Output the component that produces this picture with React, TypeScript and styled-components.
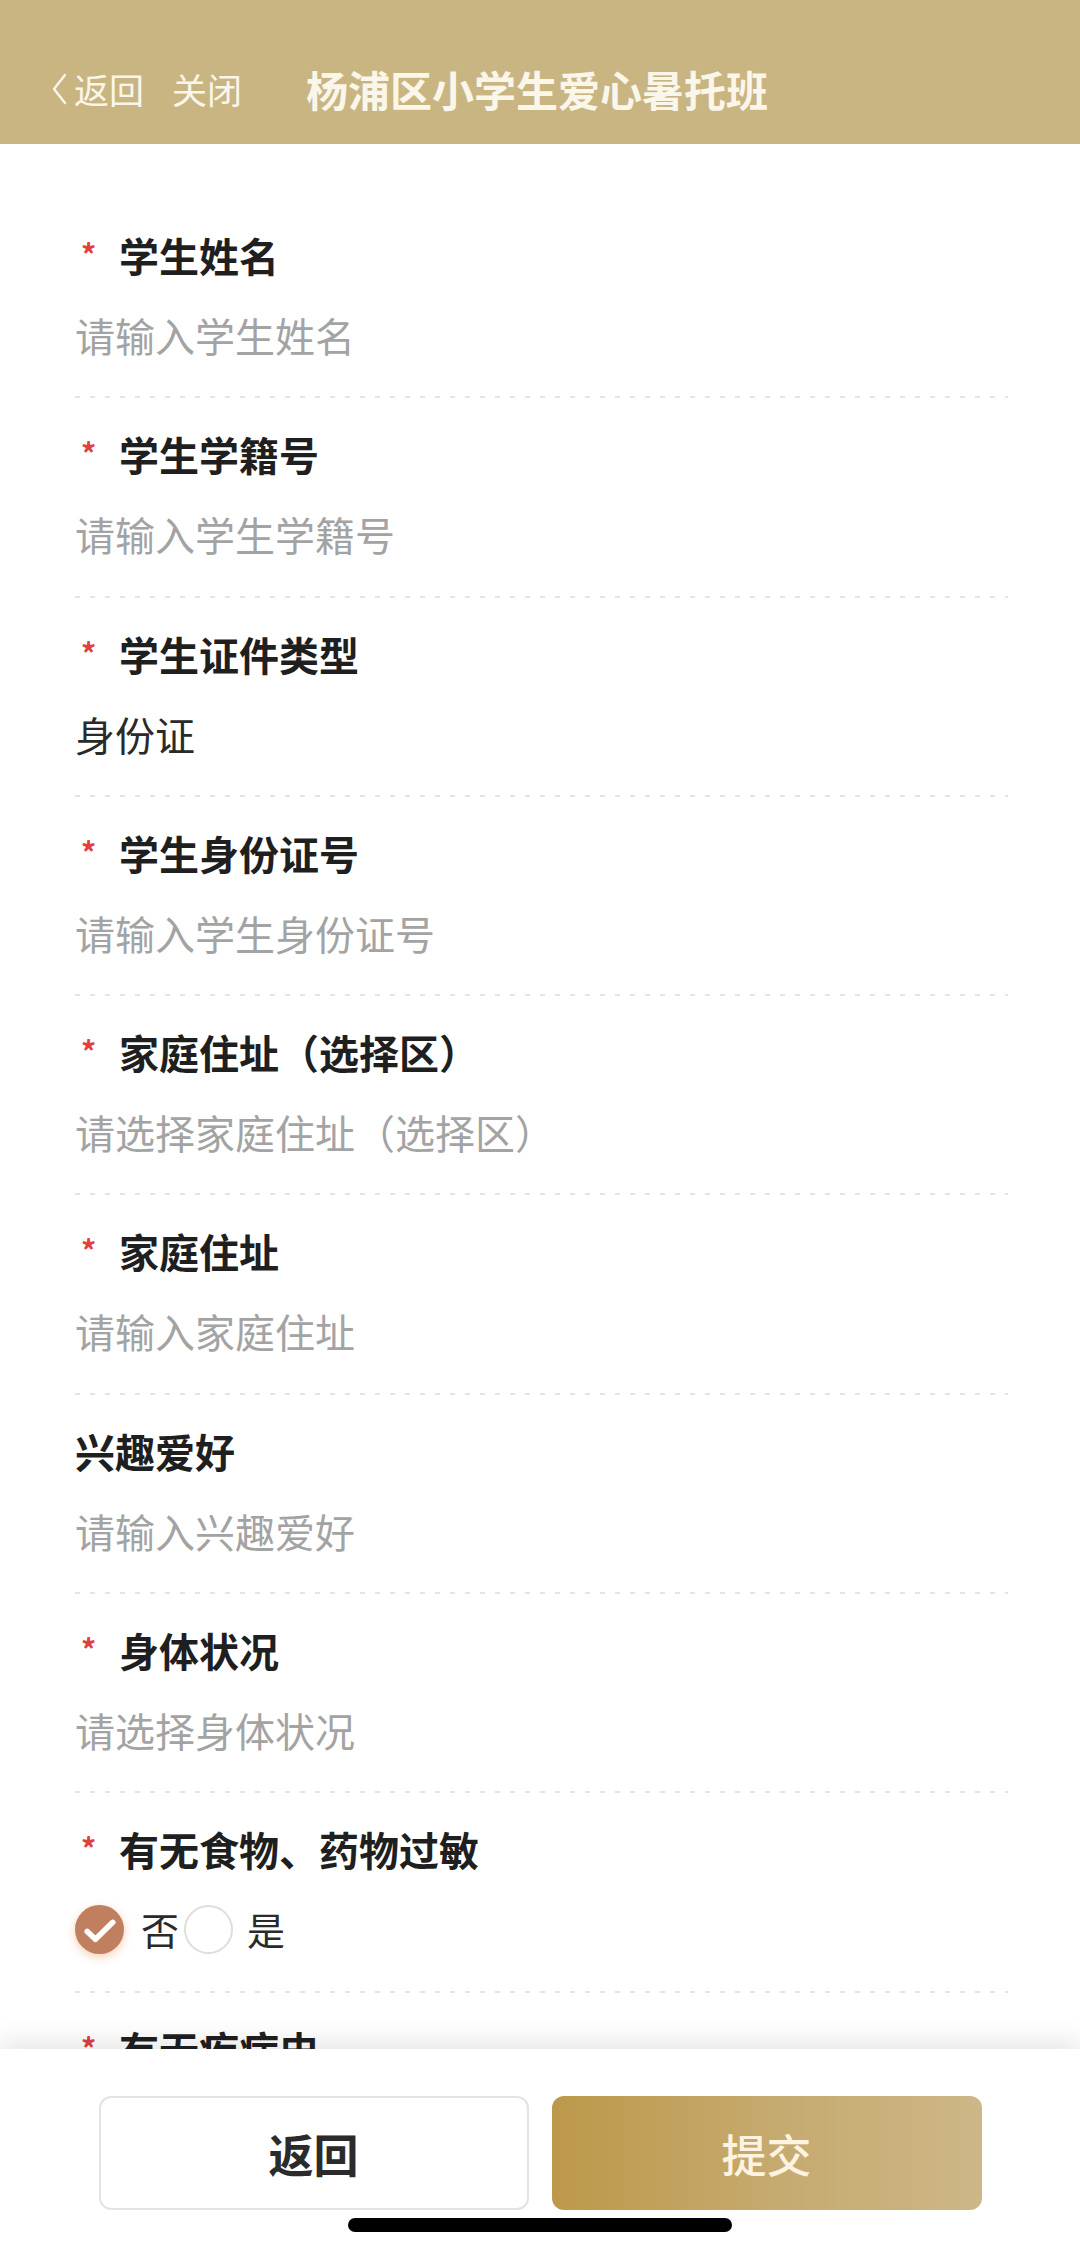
import React, { useState } from "react";
import styled, { createGlobalStyle } from "styled-components";

const GlobalStyle = createGlobalStyle`
    html, body {
        margin: 0;
        padding: 0;
        background: #ffffff;
    }
    body {
        font-family: "Noto Sans CJK SC", "Noto Sans", sans-serif;
    }
    * {
        box-sizing: border-box;
    }
`;

const StyledPage = styled.div`
    display: flex;
    flex-direction: column;
    width: 1080px;
    height: 2252px;
    overflow: hidden;
    background: #ffffff;
`;

const StyledHeader = styled.div`
    display: flex;
    flex-direction: row;
    align-items: center;
    flex-shrink: 0;
    height: 144px;
    padding: 33px 0 0 52px;
    background: #c9b582;
    color: #fbf6ea;
`;

const StyledNavButton = styled.div<{ $space: number }>`
    display: flex;
    flex-direction: row;
    align-items: center;
    gap: 7px;
    font-size: 35px;
    line-height: 48px;
    margin-right: ${(p) => p.$space}px;
    user-select: none;
    cursor: pointer;
`;

const StyledTitle = styled.div`
    font-size: 42px;
    font-weight: 700;
    line-height: 60px;
`;

const StyledForm = styled.div`
    flex: 1;
    min-height: 0;
    overflow: hidden;
    padding: 55px 72px 0 75px;
`;

const StyledRow = styled.div`
    display: flex;
    flex-direction: column;
    gap: 30px;
    padding: 31px 0 38.3px;
    background-image: repeating-linear-gradient(to right, #e4e4e4 0 5px, transparent 5px 15px);
    background-size: 100% 2px;
    background-position: left bottom;
    background-repeat: no-repeat;
`;

const StyledLabel = styled.div`
    display: flex;
    flex-direction: row;
    align-items: center;
    height: 50px;
    font-size: 40px;
    font-weight: 700;
    color: #1f1f1f;
`;

const StyledStar = styled.span`
    display: inline-block;
    width: 44px;
    padding-left: 6px;
    font-size: 30px;
    font-weight: 700;
    line-height: 30px;
    color: #e0413f;
    align-self: flex-start;
    margin-top: 8px;
`;

const StyledValue = styled.div<{ $filled?: boolean }>`
    height: 50px;
    font-size: 40px;
    line-height: 50px;
    color: ${(p) => (p.$filled ? "#2a2a2a" : "#a3a3a3")};
`;

const StyledRadioGroup = styled.div`
    display: flex;
    flex-direction: row;
    align-items: center;
    height: 50px;
    font-size: 38px;
    color: #2a2a2a;
`;

const StyledRadio = styled.div`
    display: flex;
    flex-direction: row;
    align-items: center;
    cursor: pointer;
`;

const StyledRadioDot = styled.div<{ $checked: boolean }>`
    display: flex;
    align-items: center;
    justify-content: center;
    width: 49px;
    height: 49px;
    border-radius: 50%;
    background: ${(p) => (p.$checked ? "#c0805f" : "#ffffff")};
    border: ${(p) => (p.$checked ? "none" : "2px solid #dedede")};
    box-shadow: ${(p) => (p.$checked ? "0 3px 10px rgba(232, 150, 90, 0.45)" : "none")};
`;

const StyledRadioText = styled.span<{ $left: number }>`
    margin-left: ${(p) => p.$left}px;
    margin-right: 5px;
    line-height: 50px;
`;

const StyledFooter = styled.div`
    position: relative;
    z-index: 1;
    display: flex;
    flex-direction: column;
    align-items: center;
    flex-shrink: 0;
    height: 203px;
    padding-top: 47px;
    background: #ffffff;
    box-shadow: 0 -10px 22px rgba(0, 0, 0, 0.09);
`;

const StyledButtonRow = styled.div`
    display: grid;
    grid-template-columns: 430px 430px;
    gap: 23px;
`;

const StyledButton = styled.button<{ $primary?: boolean }>`
    all: unset;
    display: flex;
    align-items: center;
    justify-content: center;
    height: 114px;
    border-radius: 12px;
    font-family: "Noto Sans CJK SC", sans-serif;
    font-size: 45px;
    font-weight: ${(p) => (p.$primary ? 500 : 700)};
    color: ${(p) => (p.$primary ? "#fcf4e0" : "#2b2b2b")};
    background: ${(p) => (p.$primary ? "linear-gradient(to right, #bd984a, #c6ab71 55%, #cdb787)" : "#ffffff")};
    border: ${(p) => (p.$primary ? "none" : "2px solid #e3e3e3")};
    box-sizing: border-box;
    cursor: pointer;
    user-select: none;
`;

const StyledHomeBar = styled.div`
    width: 384px;
    height: 14px;
    margin-top: 8px;
    border-radius: 7px;
    background: #000000;
`;

const ChevronIcon = () => (
    <svg width="15" height="32" viewBox="0 0 15 32">
        <polyline points="13,2 2,16 13,30" fill="none" stroke="#fbf6ea" strokeWidth="2.4" strokeLinecap="round" strokeLinejoin="round" />
    </svg>
);

const CheckIcon = () => (
    <svg width="49" height="49" viewBox="0 0 48 48">
        <polyline points="12,26 20,33.5 37,17" fill="none" stroke="#ffffff" strokeWidth="5.5" strokeLinecap="round" strokeLinejoin="round" />
    </svg>
);

const fields = [
    { label: "学生姓名", value: "请输入学生姓名", required: true },
    { label: "学生学籍号", value: "请输入学生学籍号", required: true },
    { label: "学生证件类型", value: "身份证", required: true, filled: true },
    { label: "学生身份证号", value: "请输入学生身份证号", required: true },
    { label: "家庭住址（选择区）", value: "请选择家庭住址（选择区）", required: true },
    { label: "家庭住址", value: "请输入家庭住址", required: true },
    { label: "兴趣爱好", value: "请输入兴趣爱好", required: false },
    { label: "身体状况", value: "请选择身体状况", required: true },
];

const App = () => {
    const [allergy, setAllergy] = useState("no");

    return (
        <StyledPage>
            <GlobalStyle />
            <StyledHeader>
                <StyledNavButton $space={28}>
                    <ChevronIcon />
                    <span>返回</span>
                </StyledNavButton>
                <StyledNavButton $space={64}>关闭</StyledNavButton>
                <StyledTitle>杨浦区小学生爱心暑托班</StyledTitle>
            </StyledHeader>
            <StyledForm>
                {fields.map((f) => (
                    <StyledRow key={f.label}>
                        <StyledLabel>
                            {f.required && <StyledStar>*</StyledStar>}
                            {f.label}
                        </StyledLabel>
                        <StyledValue $filled={f.filled}>{f.value}</StyledValue>
                    </StyledRow>
                ))}
                <StyledRow>
                    <StyledLabel>
                        <StyledStar>*</StyledStar>
                        有无食物、药物过敏
                    </StyledLabel>
                    <StyledRadioGroup>
                        <StyledRadio onClick={() => setAllergy("no")}>
                            <StyledRadioDot $checked={allergy === "no"}>{allergy === "no" && <CheckIcon />}</StyledRadioDot>
                            <StyledRadioText $left={17}>否</StyledRadioText>
                        </StyledRadio>
                        <StyledRadio onClick={() => setAllergy("yes")}>
                            <StyledRadioDot $checked={allergy === "yes"}>{allergy === "yes" && <CheckIcon />}</StyledRadioDot>
                            <StyledRadioText $left={14}>是</StyledRadioText>
                        </StyledRadio>
                    </StyledRadioGroup>
                </StyledRow>
                <StyledRow>
                    <StyledLabel>
                        <StyledStar>*</StyledStar>
                        有无疾病史
                    </StyledLabel>
                    <StyledValue>请选择</StyledValue>
                </StyledRow>
            </StyledForm>
            <StyledFooter>
                <StyledButtonRow>
                    <StyledButton>返回</StyledButton>
                    <StyledButton $primary>提交</StyledButton>
                </StyledButtonRow>
                <StyledHomeBar />
            </StyledFooter>
        </StyledPage>
    );
};

export default App;
